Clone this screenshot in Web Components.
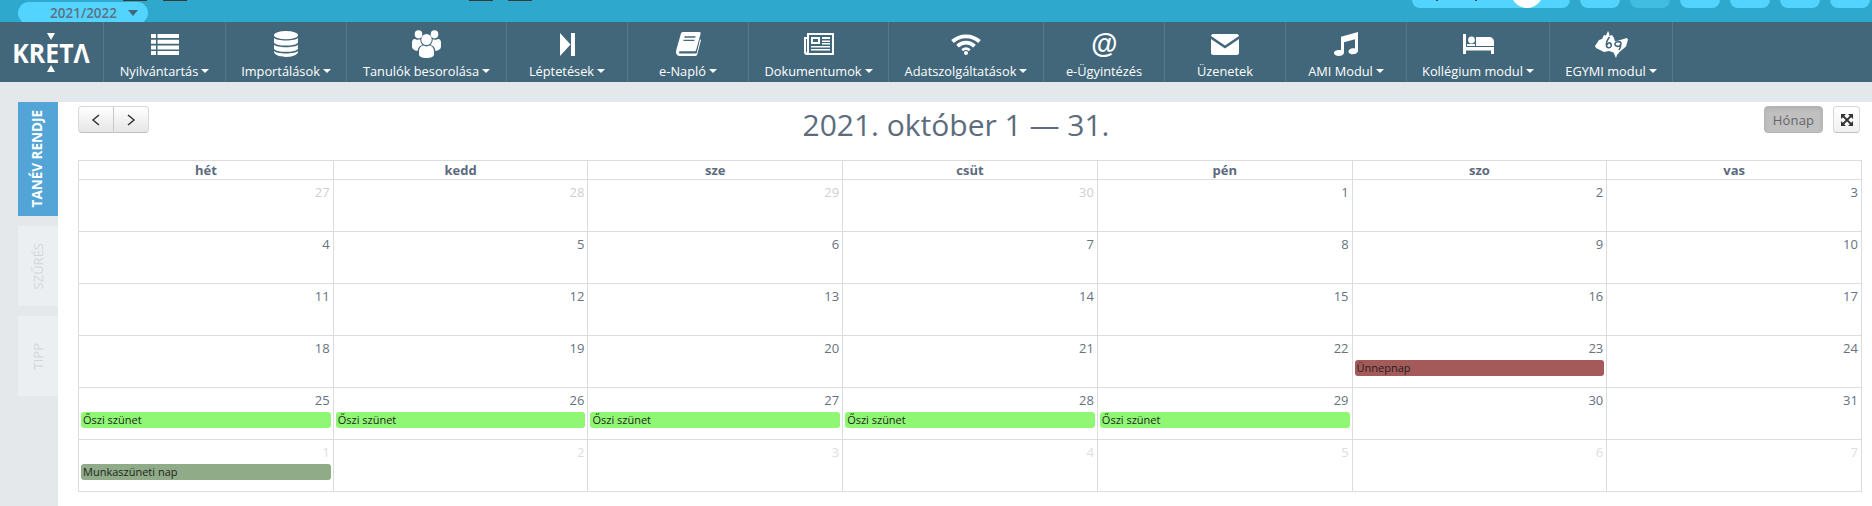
<!DOCTYPE html>
<html lang="hu">
<head>
<meta charset="utf-8">
<title>KRÉTA</title>
<style>
  html, body { margin: 0; padding: 0; }
  body { width: 1872px; height: 506px; overflow: hidden; background: #e4e8eb; font-family: "Open Sans", sans-serif; }
</style>
</head>
<body>
<kreta-topbar></kreta-topbar>
<kreta-nav>
  <nav-item w="122" label="Nyilvántartás" icon="list" caret></nav-item>
  <nav-item w="121" label="Importálások" icon="db" caret></nav-item>
  <nav-item w="160" label="Tanulók besorolása" icon="users" caret></nav-item>
  <nav-item w="121" label="Léptetések" icon="step" caret></nav-item>
  <nav-item w="121" label="e-Napló" icon="book" caret></nav-item>
  <nav-item w="140" label="Dokumentumok" icon="news" caret></nav-item>
  <nav-item w="155" label="Adatszolgáltatások" icon="wifi" caret></nav-item>
  <nav-item w="121" label="e-Ügyintézés" icon="at"></nav-item>
  <nav-item w="121" label="Üzenetek" icon="mail"></nav-item>
  <nav-item w="121" label="AMI Modul" icon="music" caret></nav-item>
  <nav-item w="143" label="Kollégium modul" icon="bed" caret></nav-item>
  <nav-item w="123" label="EGYMI modul" icon="sign" caret></nav-item>
</kreta-nav>
<kreta-main>
  <side-tab slot="tabs" active h="114">TANÉV RENDJE</side-tab>
  <side-tab slot="tabs" h="80">SZŰRÉS</side-tab>
  <side-tab slot="tabs" h="80">TIPP</side-tab>
  <cal-toolbar>2021. október 1 — 31.</cal-toolbar>
  <cal-month></cal-month>
</kreta-main>
<script>
const ICONS = {
  list: '<svg width="28" height="21" viewBox="0 0 28 21" fill="#fff"><path d="M0 0h5v4H0zM6.500 0H28v4H6.500zM0 5.700h5v4H0zM6.500 5.700H28v4H6.500zM0 11.400h5v4H0zM6.500 11.400H28v4H6.500zM0 17h5v4H0zM6.500 17H28v4H6.500z"/></svg>',
  db: '<svg width="24" height="26" viewBox="0 0 24 25" preserveAspectRatio="none" fill="#fff"><ellipse cx="12" cy="4" rx="12" ry="4"/><path d="M0 6.500C2 10 22 10 24 6.500V11C22 15 2 15 0 11zM0 13C2 16.500 22 16.500 24 13v4C22 21 2 21 0 17zM0 19C2 22.500 22 22.500 24 19v1.500C22 26.500 2 26.500 0 20.500z"/></svg>',
  users: '<svg width="29" height="28" viewBox="0 0 29 26" preserveAspectRatio="none" fill="#fff"><circle cx="6.500" cy="4" r="3.800"/><circle cx="22.500" cy="4" r="3.800"/><circle cx="14.500" cy="8.800" r="5.200"/><path d="M0 11.500C0 9 2 8 3.500 8.500c2 .8 3.500.5 4.700.2.2 2 1 4 2.300 5.300-3 .8-4.500 2.500-5 5.500C2.500 19 0 17.500 0 15.500zM29 11.500c0-2.500-2-3.500-3.500-3C23.500 9.300 22 9 20.800 8.700c-.2 2-1 4-2.300 5.300 3 .8 4.500 2.500 5 5.500 3-.5 5.500-2 5.500-4zM7 20c0-3 2-5.200 4.500-5.500 1.800 1 4.200 1 6 0C20 14.800 22 17 22 20v2.500C22 24.800 19 26 14.500 26S7 24.800 7 22.500z"/></svg>',
  step: '<svg width="15" height="23" viewBox="0 0 15 23" fill="#fff"><path d="M0 0l10.500 11.500L0 23zM11 0h4v23h-4z"/></svg>',
  book: '<svg width="25" height="24" viewBox="0 0 26 25" fill="#fff"><path fill-rule="evenodd" d="M7 0h17.500c1 0 1.300.8 1.100 1.800L21 18.500c-.3 1.200-1 1.500-2 1.500H5c-1.500 0-2 .5-2 1.200 0 .8.700 1.300 2 1.300h16.500L25 7.500l1 .8-3.800 15c-.2 1-1 1.700-2 1.700H4c-2.500 0-4-1.500-4-4 0-1 .2-2 .5-3L5 2C5.300.8 6 0 7 0zM9 4.500 8.600 6H20l.4-1.500zM8 8 7.600 9.500H19L19.400 8z"/></svg>',
  news: '<svg width="30" height="22" viewBox="0 0 30 22" fill="#fff"><path fill-rule="evenodd" d="M3 0h27v22H3c-2 0-3-1-3-3V4h3zM5 2v17.500c0 .3-.2.500-.5.500H28V2zM2 6v13c0 .6.800.6 1 0V6z"/><path fill-rule="evenodd" d="M7 4h9v7H7zm2 2v3h5V6zM18 4h8v2h-8zM18 7.500h8V9h-8zM18 10h8v1.500h-8zM7 13h19v1.500H7zM7 16h19v1.500H7z"/></svg>',
  wifi: '<svg width="30" height="21" viewBox="0 0 30 21" fill="none" stroke="#fff" stroke-width="3.800"><path d="M1.500 7.500C9 .6 21 .6 28.500 7.500"/><path d="M6.500 12.200C11.500 7.500 18.500 7.500 23.500 12.200"/><path d="M11.200 16.300c2.300-2 5.300-2 7.600 0" stroke-width="2.600"/><circle cx="15" cy="19" r="2" fill="#fff" stroke="none"/></svg>',
  at: '<span style="font:italic 700 27px/28px \'Liberation Sans\',sans-serif;color:#fff">@</span>',
  mail: '<svg width="28" height="21" viewBox="0 0 28 21" fill="#fff"><path d="M2 0h24c1 0 2 1 2 2L14 11.500 0 2C0 1 1 0 2 0zM0 5l14 9.500L28 5v14c0 1.300-1 2-2.500 2h-23C1 21 0 20.300 0 19z"/></svg>',
  music: '<svg width="24" height="24" viewBox="0 0 24 28" preserveAspectRatio="none" fill="#fff"><path d="M7 5.500 24 0v22c0 2.500-2.500 4-5 4s-4.500-1.300-4.500-3.300S17 19 19 19c1 0 1.800.2 2 .4V8.500L10 12v12c0 2.500-2.500 4-5 4s-5-1.500-5-3.500S2.500 21 5 21c.8 0 1.600.2 2 .4z"/></svg>',
  bed: '<svg width="31" height="20" viewBox="0 0 31 20" fill="#fff"><path d="M0 0h3v13h28v7h-3v-3.500H3V20H0z"/><circle cx="8.500" cy="6" r="3.400"/><path d="M13 3h13c3 0 5 2 5 5v4H13z"/><path d="M4 10h8v2H4z"/></svg>',
  sign: '<svg width="33" height="27" viewBox="0 0 33 27"><path fill="#fff" d="M0 15 4 9l3-1 2-4 2 .5L13 0l1.500 3L14 5l3-1 2 3 1 3.500L32 7l1 1.500-2 7-6 5-3 3.500-1 3-2.500-5.500L14 20 9 21 1 17z"/><g fill="none" stroke="#42677b" stroke-width="1.600"><path d="M14.500 6c-2 2.500-3.500 6-3 9 .4 2 3.500 2.500 4.500.5 1-2-.5-4-2.200-3.500-1.300.4-1.900 1.500-2 2.500"/><path d="M26 11.500c-2-1.500-5.500-1-6 1.300-.4 2 2 3.200 4.500 2.200 1-.5 1.500-1.500 1.500-3.500 0 3-.5 5.500-2 7.500"/></g></svg>'
};

function def(name, css, html, init) {
  customElements.define(name, class extends HTMLElement {
    constructor() {
      super();
      this.attachShadow({ mode: "open" });
      this.shadowRoot.innerHTML = "<style>" + css + "</style>" + (typeof html === "function" ? html(this) : html);
    }
    connectedCallback() { if (init) init(this); }
  });
}

def("kreta-topbar", `
  :host { display: flex; height: 22px; background: #2fa8cd; justify-content: space-between; overflow: hidden; position: relative; }
  .year { margin: 2px 0 0 18px; width: 130px; height: 22px; box-sizing: border-box; border-radius: 11px; background: #52d4ff; color: #5f7080; font: 600 13.500px/20px "Open Sans", sans-serif; padding-left: 32px; display: flex; align-items: center; gap: 11px; }
  .year i { width: 0; height: 0; border: 5px solid transparent; border-top: 6px solid #42677b; border-bottom: 0; }
  .right { display: flex; gap: 10px; height: 8px; margin-right: 2px; }
  .pill { width: 40px; height: 8px; background: #52d4ff; border-radius: 0 0 8px 8px; }
  .pill.dim { background: #41bde1; }
  .pill.wide { width: 158px; position: relative; overflow: hidden; }
  .pill.wide b { position: absolute; left: 99px; top: -24px; width: 32px; height: 32px; border-radius: 50%; background: #fff; }
  .pill.wide u { position: absolute; top: 0; width: 2px; height: 1px; background: #3a4a55; }
  .bits i { position: absolute; top: 0; height: 1px; width: 24px; background: #3a3a30; }
`, `
  <div class="year">2021/2022<i></i></div>
  <div class="bits"><i style="left:123px"></i><i style="left:163px"></i><i style="left:469px"></i><i style="left:508px"></i></div>
  <div class="right"><div class="pill wide"><u style="left:24px"></u><u style="left:63px"></u><b></b></div><div class="pill"></div><div class="pill dim"></div><div class="pill"></div><div class="pill"></div><div class="pill"></div><div class="pill"></div></div>
`);

def("kreta-nav", `
  :host { display: flex; height: 60px; background: #42677b; }
  .logo { width: 104px; flex: none; display: flex; align-items: center; justify-content: center; box-sizing: border-box; border-right: 1px solid #55788b; }
  .brand { position: relative; width: 76px; height: 39px; display: flex; align-items: center; justify-content: center; margin-top: 1px; }
  .brand span { font: 700 27px/1 "Open Sans", sans-serif; color: #fff; transform: scaleX(.92); white-space: nowrap; }
  .brand i { position: absolute; left: 33px; width: 0; height: 0; border-left: 4px solid transparent; border-right: 4px solid transparent; }
  .brand .up { top: 0; border-top: 7px solid #fff; }
  .brand .dn { bottom: 0; border-bottom: 7px solid #fff; }
`, `
  <div class="logo"><div class="brand"><i class="up"></i><span>KRETΛ</span><i class="dn"></i></div></div>
  <slot></slot>
`);

def("nav-item", `
  :host { display: flex; flex: none; flex-direction: column; align-items: center; box-sizing: border-box; height: 60px; border-right: 1px solid #55788b; color: #fff; font: 400 12.800px/16px "Open Sans", sans-serif; }
  .ic { height: 38px; display: flex; align-items: center; justify-content: center; margin-top: 3px; }
  .lb { display: flex; align-items: center; gap: 3px; white-space: nowrap; }
  .lb i { width: 0; height: 0; border: 4px solid transparent; border-top: 4px solid #fff; border-bottom: 0; }
`, el => `
  <div class="ic">${ICONS[el.getAttribute("icon")]}</div>
  <div class="lb">${el.getAttribute("label")}${el.hasAttribute("caret") ? "<i></i>" : ""}</div>
`, el => { el.style.width = el.getAttribute("w") + "px"; });

def("kreta-main", `
  :host { display: flex; height: 424px; padding-top: 20px; box-sizing: border-box; }
  .tabs { width: 40px; margin-left: 18px; display: flex; flex-direction: column; gap: 10px; flex: none; }
  .panel { flex: 1; background: #fff; padding: 4px 10px 0 20px; height: 404px; box-sizing: border-box; }
`, `
  <div class="tabs"><slot name="tabs"></slot></div>
  <div class="panel"><slot></slot></div>
`);

def("side-tab", `
  :host { display: flex; align-items: center; justify-content: center; background: #ebeff2; color: #d3d6d9; font: 400 13px/1 "Open Sans", sans-serif; }
  :host([active]) { background: #52a5d6; color: #fff; font-weight: 700; font-size: 13.500px; }
  span { writing-mode: vertical-rl; transform: rotate(180deg); white-space: nowrap; }
`, `<span><slot></slot></span>`, el => { el.style.height = el.getAttribute("h") + "px"; });

def("cal-toolbar", `
  :host { display: grid; grid-template-columns: 1fr auto 1fr; align-items: start; height: 54px; }
  h2 { margin: 0 28px 0 0; font: 400 30px/38px "Open Sans", sans-serif; color: #5c6b7d; white-space: nowrap; }
  .l { display: flex; }
  .r { display: flex; justify-content: flex-end; gap: 10px; margin-right: 2px; }
  button { height: 27px; box-sizing: border-box; padding: 0; border: 1px solid #d8d8d8; border-bottom-color: #bfbfbf; background: linear-gradient(#fff, #e6e6e6); color: #333; display: flex; align-items: center; justify-content: center; font: 400 13px "Open Sans", sans-serif; border-radius: 4px; }
  .nav.a { width: 36px; border-radius: 4px 0 0 4px; border-right-color: #c8c8c8; }
  .nav.b { width: 35px; border-radius: 0 4px 4px 0; border-left: 0; }
  .month { width: 59px; background: #c0c0c0; color: #666; border-color: #b5b5b5; box-shadow: inset 0 2px 4px rgba(0,0,0,.08); letter-spacing: .2px; }
  .full { width: 27px; background: linear-gradient(#fff, #f1f1f1); }
`, `
  <div class="l">
    <button class="nav a" aria-label="előző"><svg width="10" height="12" viewBox="0 0 10 12" fill="none" stroke="#333" stroke-width="1.500"><path d="M8 1 2 6l6 5"/></svg></button>
    <button class="nav b" aria-label="következő"><svg width="10" height="12" viewBox="0 0 10 12" fill="none" stroke="#333" stroke-width="1.500"><path d="M2 1l6 5-6 5"/></svg></button>
  </div>
  <h2><slot></slot></h2>
  <div class="r">
    <button class="month">Hónap</button>
    <button class="full" aria-label="teljes képernyő"><svg width="12" height="12" viewBox="0 0 12 12"><path fill="#333" d="M0 0h5L0 5zM12 0v5L7 0zM0 12V7l5 5zM12 12H7l5-5z"/><path stroke="#333" stroke-width="1.800" d="M2 2l8 8M10 2l-8 8"/></svg></button>
  </div>
`);

const HEAD = ["hét", "kedd", "sze", "csüt", "pén", "szo", "vas"];
const DAYS = [27,28,29,30,1,2,3, 4,5,6,7,8,9,10, 11,12,13,14,15,16,17, 18,19,20,21,22,23,24, 25,26,27,28,29,30,31, 1,2,3,4,5,6,7];
const EVENTS = { 26: ["Ünnepnap", "#a55a5a"], 28: ["Őszi szünet", "#90f774"], 29: ["Őszi szünet", "#90f774"], 30: ["Őszi szünet", "#90f774"], 31: ["Őszi szünet", "#90f774"], 32: ["Őszi szünet", "#90f774"], 35: ["Munkaszüneti nap", "#90ab87"] };

def("cal-month", `
  :host { display: grid; grid-template-columns: repeat(7, 1fr); width: 1784px; box-sizing: border-box; border-top: 1px solid #dcdcdc; border-left: 1px solid #dcdcdc; color: #66727f; font-family: "Open Sans", sans-serif; }
  .h, .d { border-right: 1px solid #dcdcdc; border-bottom: 1px solid #dcdcdc; box-sizing: border-box; }
  .h { height: 19px; font: 700 13px/18px "Open Sans", sans-serif; text-align: center; color: #5c6b7d; }
  .d { height: 52px; padding: 4px 3px 0 2px; text-align: right; font-size: 13px; line-height: 17px; }
  .d.o { color: #cfcfcf; }
  .d.o2 { color: #dedede; }
  .ev { margin: 3px -1px 0 0; height: 16px; border-radius: 3px; font-size: 11px; line-height: 16px; padding-left: 2px; color: #1f1f1f; text-align: left; }
`, () => HEAD.map(h => `<div class="h">${h}</div>`).join("") + DAYS.map((d, i) => {
  const e = EVENTS[i];
  const out = i < 4 ? " o" : i > 34 ? " o2" : "";
  return `<div class="d${out}">${d}${e ? `<div class="ev" style="background:${e[1]}">${e[0]}</div>` : ""}</div>`;
}).join(""));
</script>
</body>
</html>
